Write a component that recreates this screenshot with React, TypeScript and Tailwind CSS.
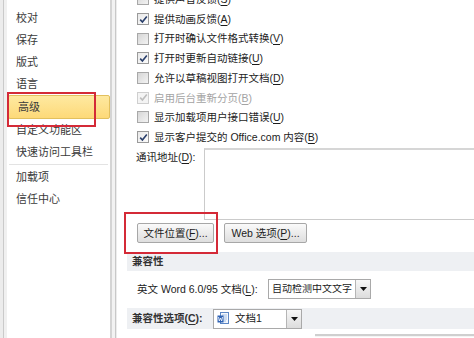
import React from "react";

type Opt = { label: string; key: string; checked?: boolean; disabled?: boolean };

const options: Opt[] = [
  { label: "提供声音反馈", key: "S" },
  { label: "提供动画反馈", key: "A", checked: true },
  { label: "打开时确认文件格式转换", key: "V" },
  { label: "打开时更新自动链接", key: "U", checked: true },
  { label: "允许以草稿视图打开文档", key: "D" },
  { label: "启用后台重新分页", key: "B", checked: true, disabled: true },
  { label: "显示加载项用户接口错误", key: "U" },
  { label: "显示客户提交的 Office.com 内容", key: "B", checked: true },
];

const navTop = ["校对", "保存", "版式", "语言", "高级", "自定义功能区", "快速访问工具栏"];
const navBottom = ["加载项", "信任中心"];

const Key = ({ k }: { k: string }) => (
  <>
    (<span className="underline underline-offset-2">{k}</span>)
  </>
);

const Checkbox = ({ checked, disabled }: { checked?: boolean; disabled?: boolean }) => (
  <div
    className={
      "w-[12px] h-[12px] border flex items-center justify-center shrink-0 " +
      (disabled
        ? "border-[#cfcfcf] bg-[#f4f4f4]"
        : checked
        ? "border-[#9a9a9a] bg-gradient-to-br from-[#e9e9e9] to-[#fbfbfb]"
        : "border-[#a8a8a8] bg-gradient-to-br from-[#d6d6d6] to-[#f3f3f3]")
    }
  >
    {checked && (
      <svg width="9" height="9" viewBox="0 0 9 9">
        <path
          d="M1.2 4.6 L3.4 7 L7.8 1.4"
          fill="none"
          stroke={disabled ? "#bdbdbd" : "#2a3f6b"}
          strokeWidth="1.6"
        />
      </svg>
    )}
  </div>
);

const Arrow = () => (
  <div className="w-[15px] h-full border-l border-[#b5b5b5] bg-gradient-to-b from-[#f7f7f7] to-[#dcdcdc] flex items-center justify-center shrink-0">
    <svg width="7" height="4" viewBox="0 0 7 4">
      <path d="M0 0 H7 L3.5 4 Z" fill="#111" />
    </svg>
  </div>
);

const DocIcon = () => (
  <svg width="12" height="13" viewBox="0 0 12 13">
    <rect x="3.5" y="0.5" width="8" height="11" fill="#f4f8fd" stroke="#5c87c5" />
    <path d="M5 3h5M5 5h5M5 7h5M5 9h4" stroke="#8fb0de" strokeWidth="0.8" />
    <rect x="0.5" y="3.5" width="6" height="7" fill="#2e62b4" />
    <path d="M1.5 5 L2.3 9 L3.5 6 L4.7 9 L5.5 5" fill="none" stroke="#fff" strokeWidth="0.8" />
  </svg>
);

const App = () => {
  return (
    <div
      className="relative w-[474px] h-[338px] overflow-hidden bg-white flex text-[11px] leading-none"
      style={{ fontFamily: '"Liberation Sans", "Noto Sans CJK SC", sans-serif' }}
    >
      {/* left frame */}
      <div className="w-[3px] bg-[#ececec]" />
      <div className="w-[1px] bg-[#cacaca]" />
      <div className="w-[3px] bg-[#f0f0f0]" />

      {/* sidebar */}
      <div className="w-[103px] bg-white flex flex-col pt-[7px] text-[#3a3a3a]">
        {navTop.map((item) => (
          <div
            key={item}
            className={
              "flex items-center pl-[9px] " +
              (item === "高级"
                ? "ml-[1px] border border-[#e2c05e] rounded-[2px] bg-gradient-to-b from-[#fee9a0] to-[#fdd978] h-[24px]"
                : "h-[22px]")
            }
          >
            {item}
          </div>
        ))}
        <div className="h-[1px] bg-[#e3e3e3] mx-[2px] mt-[1px] mb-[1px]" />
        {navBottom.map((item) => (
          <div key={item} className="h-[22px] flex items-center pl-[9px]">
            {item}
          </div>
        ))}
      </div>

      {/* divider */}
      <div className="w-[2px] bg-[#d4d4d4]" />
      <div className="w-[3px] bg-[#f2f2f2]" />
      <div className="w-[1px] bg-[#c8c8c8]" />
      <div className="w-[1px] bg-[#ececec]" />

      {/* main */}
      <div className="flex-1 flex flex-col text-[#1c1c1c] text-[10.5px]">
        <div className="-mt-[10.5px] pl-[20px]">
          {options.map((o, i) => (
            <div key={i} className="h-[19.7px] flex items-center gap-[5px] whitespace-nowrap">
              <Checkbox checked={o.checked} disabled={o.disabled} />
              <span className={o.disabled ? "text-[#a3a3a3]" : ""}>
                {o.label}
                <Key k={o.key} />
              </span>
            </div>
          ))}
        </div>

        <div className="flex pl-[19px] mt-[1px]">
          <div className="w-[68px] pt-[4px]">
            通讯地址(<span className="underline underline-offset-2">D</span>):
          </div>
          <div className="flex-1 h-[72px] border border-[#cbcbcb] border-t-2 border-t-[#d6d6d6] border-r-0 bg-white" />
        </div>

        <div className="flex gap-[10px] pl-[20px] mt-[3px]">
          <div className="w-[77px] h-[20px] border border-[#a7a7a7] rounded-[2px] bg-gradient-to-b from-[#fafafa] to-[#dedede] flex items-center justify-center">
            文件位置(<span className="underline underline-offset-2">F</span>)...
          </div>
          <div className="w-[83px] h-[20px] border border-[#a7a7a7] rounded-[2px] bg-gradient-to-b from-[#fafafa] to-[#dedede] flex items-center justify-center">
            Web 选项(<span className="underline underline-offset-2">P</span>)...
          </div>
        </div>

        <div className="mt-[9px] ml-[10px] h-[19px] bg-[#eef0f3] flex items-center pl-[5px] font-bold text-[#333]">
          兼容性
        </div>

        <div className="flex items-center pl-[20px] h-[28px] mt-[4px]">
          <span className="w-[131px] whitespace-nowrap">
            英文 Word 6.0/95 文档(<span className="underline underline-offset-2">L</span>):
          </span>
          <div className="w-[103px] h-[20px] border border-[#a9a9a9] bg-white flex items-center">
            <span className="flex-1 pl-[3px] overflow-hidden whitespace-nowrap text-[10px]">自动检测中文文字</span>
            <Arrow />
          </div>
        </div>

        <div className="mt-[5px] ml-[10px] h-[21px] bg-[#eef0f3] flex items-center pl-[5px] text-[#222]">
          <span className="w-[81px] font-bold text-[#333] whitespace-nowrap">
            兼容性选项(<span className="underline underline-offset-2">C</span>):
          </span>
          <div className="w-[89px] h-[20px] border border-[#a9a9a9] bg-white flex items-center">
            <div className="pl-[3px] pr-[6px]">
              <DocIcon />
            </div>
            <span className="flex-1">文档1</span>
            <Arrow />
          </div>
        </div>

        <div className="mt-[5px] ml-[198px] h-[3px] border-t-2 border-[#cfcfcf] bg-[#f4f4f4]" />
      </div>

      {/* red annotation boxes */}
      <div className="absolute left-[7px] top-[92px] w-[89px] h-[35px] border-2 border-[#d42a37]" />
      <div className="absolute left-[124px] top-[212px] w-[94px] h-[42px] border-2 border-[#d42a37]" />
    </div>
  );
};

export default App;
